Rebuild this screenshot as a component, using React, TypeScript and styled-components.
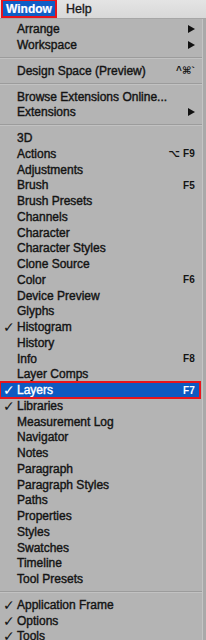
import React from 'react'
import styled, { createGlobalStyle, css } from 'styled-components';

const GlobalStyle = createGlobalStyle`
    html, body {
        margin: 0;
        padding: 0;
        background: #a9a9a9;
    }
    body {
        width: 206px;
        height: 640px;
        overflow: hidden;
        font-family: "Liberation Sans", Arial, "DejaVu Sans", sans-serif;
    }
`;

type Entry =
    | { kind: "sep" }
    | { kind: "item", label: string, check?: boolean, shortcut?: string, submenu?: boolean, active?: boolean };

const item = (label: string, extra: Partial<Omit<Extract<Entry, { kind: "item" }>, "kind" | "label">> = {}): Entry => ({ kind: "item", label, ...extra });
const sep: Entry = { kind: "sep" };

const entries: Entry[] = [
    item("Arrange", { submenu: true }),
    item("Workspace", { submenu: true }),
    sep,
    item("Design Space (Preview)", { shortcut: "^⌘`" }),
    sep,
    item("Browse Extensions Online..."),
    item("Extensions", { submenu: true }),
    sep,
    item("3D"),
    item("Actions", { shortcut: "⌥ F9" }),
    item("Adjustments"),
    item("Brush", { shortcut: "F5" }),
    item("Brush Presets"),
    item("Channels"),
    item("Character"),
    item("Character Styles"),
    item("Clone Source"),
    item("Color", { shortcut: "F6" }),
    item("Device Preview"),
    item("Glyphs"),
    item("Histogram", { check: true }),
    item("History"),
    item("Info", { shortcut: "F8" }),
    item("Layer Comps"),
    item("Layers", { check: true, shortcut: "F7", active: true }),
    item("Libraries", { check: true }),
    item("Measurement Log"),
    item("Navigator"),
    item("Notes"),
    item("Paragraph"),
    item("Paragraph Styles"),
    item("Paths"),
    item("Properties"),
    item("Styles"),
    item("Swatches"),
    item("Timeline"),
    item("Tool Presets"),
    sep,
    item("Application Frame", { check: true }),
    item("Options", { check: true }),
    item("Tools", { check: true }),
];

export default function App() {
    return (
        <>
            <GlobalStyle />
            <MenuBar>
                <BarTitle active>Window</BarTitle>
                <BarTitle>Help</BarTitle>
            </MenuBar>
            <Menu>
                {entries.map((e, i) => e.kind === "sep"
                    ? <Separator key={i} />
                    : (
                        <Row key={i} active={e.active}>
                            <Check>{e.check ? "✓" : ""}</Check>
                            <Label>{e.label}</Label>
                            {e.shortcut && <Shortcut>{e.shortcut}</Shortcut>}
                            {e.submenu && <Arrow />}
                        </Row>
                    ))}
            </Menu>
        </>
    )
}

const MenuBar = styled.div`
    display: flex;
    align-items: stretch;
    height: 18px;
    background: linear-gradient(#e4e4e4, #d8d8d8);
    border-bottom: 1px solid #a6a6a6;
    padding-left: 1px;
    gap: 5px;
`;

const BarTitle = styled.div<{ active?: boolean }>`
    display: flex;
    align-items: center;
    font-size: 12.5px;
    color: #1a1a1a;
    -webkit-text-stroke: 0.35px currentColor;
    padding: 0 4px;

    ${(p) => p.active && css`
        box-sizing: border-box;
        width: 56px;
        justify-content: center;
        background: #0f5dc6;
        color: #fff;
        font-size: 12px;
        font-weight: bold;
        -webkit-text-stroke: 0.2px currentColor;
        border: 2px solid #e8141c;
        border-top-width: 1px;
        padding: 0;
    `}
`;

const Menu = styled.div`
    width: 202px;
    background: #b4b4b4;
    border-right: 1px solid #c4c4c4;
    padding: 2.5px 0 0;
    color: #141414;
`;

const Row = styled.div<{ active?: boolean }>`
    position: relative;
    display: flex;
    align-items: center;
    height: 15.75px;
    padding: 0 7px 0 4px;
    font-size: 12px;

    ${(p) => p.active && css`
        background: #0d5ac2;
        color: #fff;
        outline: 2px solid #e8141c;
        outline-offset: -1px;
        margin-right: 2px;
        padding-right: 5px;
    `}
`;

const Check = styled.span`
    width: 14px;
    margin-left: -1px;
    font-family: "DejaVu Sans", sans-serif;
    font-size: 14px;
    font-weight: bold;
    line-height: 1;
`;

const Label = styled.span`
    flex: 1;
    white-space: nowrap;
    -webkit-text-stroke: 0.4px currentColor;
`;

const Shortcut = styled.span`
    font-size: 10px;
    font-weight: bold;
    letter-spacing: 0.2px;
    white-space: pre;
`;

const Arrow = styled.span`
    width: 0;
    height: 0;
    border-top: 4px solid transparent;
    border-bottom: 4px solid transparent;
    border-left: 7px solid #111;
`;

const Separator = styled.div`
    height: 10px;
    display: flex;
    flex-direction: column;
    justify-content: center;

    &::before {
        content: "";
        height: 1px;
        background: #9c9c9c;
    }
    &::after {
        content: "";
        height: 1px;
        background: #c2c2c2;
    }
`;
